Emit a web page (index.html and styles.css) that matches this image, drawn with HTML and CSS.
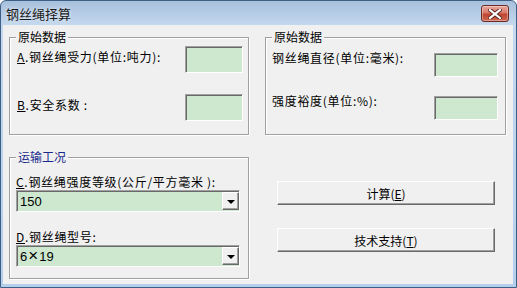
FILE: index.html
```html
<!DOCTYPE html>
<html>
<head>
    <meta charset="utf-8">
    <title>钢丝绳择算</title>
    <link rel="stylesheet" href="styles.css">
</head>
<body>
    <div class="window">
        <div class="titlebar">
            <span class="title">钢丝绳择算</span>
            <button class="close-btn" title="关闭">
                <svg width="14" height="10" viewBox="0 0 14 10">
                    <path d="M2 1 L12 9 M12 1 L2 9" stroke="#5a231d" stroke-width="4" stroke-linecap="square"/>
                    <path d="M2 1 L12 9 M12 1 L2 9" stroke="#ffffff" stroke-width="2.2" stroke-linecap="square"/>
                </svg>
            </button>
        </div>

        <div class="client">
            <!-- 原始数据 (左) -->
            <div class="group group-left">
                <span class="legend">原始数据</span>
                <div class="row row-a">
                    <label><u>A</u>.钢丝绳受力(单位:吨力):</label>
                    <input type="text" class="field field-small">
                </div>
                <div class="row row-b">
                    <label><u>B</u>.安全系数 :</label>
                    <input type="text" class="field field-small">
                </div>
            </div>

            <!-- 原始数据 (右) -->
            <div class="group group-right">
                <span class="legend">原始数据</span>
                <div class="row row-1">
                    <label>钢丝绳直径(单位:毫米):</label>
                    <input type="text" class="field field-wide">
                </div>
                <div class="row row-2">
                    <label>强度裕度(单位:%):</label>
                    <input type="text" class="field field-wide">
                </div>
            </div>

            <!-- 运输工况 -->
            <div class="group group-work">
                <span class="legend legend-blue">运输工况</span>
                <label class="combo-label first"><u>C</u>.钢丝绳强度等级(公斤/平方毫米 ):</label>
                <div class="combo">
                    <span class="combo-value">150</span>
                    <span class="combo-drop"><span class="arrow"></span></span>
                </div>
                <label class="combo-label"><u>D</u>.钢丝绳型号:</label>
                <div class="combo">
                    <span class="combo-value">6<span class="times">×</span>19</span>
                    <span class="combo-drop"><span class="arrow"></span></span>
                </div>
            </div>

            <!-- 按钮 -->
            <div class="actions">
                <button class="btn">计算(<u>E</u>)</button>
                <button class="btn">技术支持(<u>T</u>)</button>
            </div>
        </div>
    </div>
</body>
</html>
```

FILE: styles.css
```css
html, body {
    margin: 0;
    padding: 0;
}
body {
    width: 517px;
    height: 288px;
    overflow: hidden;
    font-family: "Noto Sans CJK SC", "Liberation Sans", sans-serif;
    font-size: 12px;
    color: #000;
    background: #ffffff;
}
.window {
    width: 517px;
    height: 288px;
    box-sizing: border-box;
    border: 1px solid #3d5f86;
    border-radius: 6px 6px 0 0;
    background: linear-gradient(#a7c0dc 0, #c4d8ee 24px, #b4cfec 100%);
    display: flex;
    flex-direction: column;
    padding: 0 3px 3px 2px;
}
.titlebar {
    height: 24px;
    display: flex;
    align-items: flex-start;
    flex: none;
}
.title {
    padding: 5px 0 0 3px;
    line-height: 15px;
    font-size: 13px;
    color: #1b1b1b;
    text-shadow: 0 0 4px rgba(255,255,255,0.8);
}
.close-btn {
    margin: 4px 4px 0 auto;
    width: 28px;
    height: 17px;
    padding: 0;
    border: 1px solid #6b2a22;
    border-radius: 3px;
    background: linear-gradient(#e8aa9d 0, #d8796a 45%, #c0432f 55%, #cf6a52 100%);
    box-shadow: inset 0 0 0 1px rgba(255,255,255,0.35);
    display: flex;
    align-items: center;
    justify-content: center;
}
.client {
    flex: 1;
    background: #f0f0f0;
    display: grid;
    grid-template-columns: 240px 241px;
    grid-template-rows: 98px 122px;
    column-gap: 16px;
    row-gap: 22px;
    padding: 12px 0 0 6px;
}
.group {
    position: relative;
    border: 1px solid #a0a0a0;
    box-shadow: inset 1px 1px 0 #fff, 1px 1px 0 #fff;
    display: flex;
    flex-direction: column;
}
.group label {
    letter-spacing: 0.7px;
    white-space: nowrap;
}
.legend {
    position: absolute;
    top: -8px;
    left: 6px;
    padding: 0 2px;
    line-height: 14px;
    background: #f0f0f0;
}
.legend-blue {
    color: #1a2a8c;
}
.row {
    display: flex;
    justify-content: space-between;
    align-items: flex-start;
}
.group-left {
    padding: 8px 5px 0 7px;
}
.group-left label {
    margin-top: 4px;
    line-height: 14px;
}
.row-b {
    margin-top: 21px;
}
.group-right {
    padding: 13px 7px 0 6px;
}
.group-right label {
    line-height: 14px;
}
.group-right .field {
    margin-top: 2px;
}
.row-2 {
    margin-top: 17px;
}
.field {
    box-sizing: border-box;
    border: 1px solid;
    border-color: #a0a0a0 #fff #fff #a0a0a0;
    box-shadow: inset 1px 1px 0 #696969;
    background: #cde8cf;
    padding: 0;
    margin: 0;
    outline: none;
}
.field-small {
    width: 58px;
    height: 27px;
}
.field-wide {
    width: 64px;
    height: 24px;
}
.group-work {
    padding: 0 6px 0 6px;
}
.combo-label {
    line-height: 14px;
    margin-top: 18px;
    margin-bottom: 1px;
}
.combo-label.first {
    margin-top: 17px;
}
.combo {
    box-sizing: border-box;
    height: 22px;
    width: 224px;
    border: 1px solid;
    border-color: #a0a0a0 #fff #fff #a0a0a0;
    box-shadow: inset 1px 1px 0 #696969;
    background: #cde8cf;
    display: flex;
    align-items: stretch;
    padding: 1px 0 1px 1px;
}
.combo-value {
    flex: 1;
    padding-left: 2px;
    font-family: "Liberation Sans", "Noto Sans CJK SC", sans-serif;
    font-size: 13px;
    line-height: 19px;
}
.times {
    display: inline-block;
    font-size: 17px;
    font-weight: 300;
    padding: 0 1px;
    line-height: 17px;
}
.combo-drop {
    width: 17px;
    box-sizing: border-box;
    background: #f0f0f0;
    border: 1px solid;
    border-color: #fff #696969 #696969 #fff;
    box-shadow: inset -1px -1px 0 #a0a0a0;
    display: flex;
    align-items: center;
    justify-content: center;
}
.arrow {
    width: 0;
    height: 0;
    border-left: 4px solid transparent;
    border-right: 4px solid transparent;
    border-top: 4px solid #000;
    margin-top: 1px;
}
.actions {
    display: flex;
    flex-direction: column;
    padding: 24px 0 0 12px;
    gap: 23px;
}
.btn {
    width: 218px;
    height: 24px;
    box-sizing: border-box;
    background: #f0f0f0;
    border: 1px solid;
    border-color: #fff #696969 #696969 #fff;
    box-shadow: inset -1px -1px 0 #a0a0a0;
    font-family: "Noto Sans CJK SC", "Liberation Sans", sans-serif;
    font-size: 12px;
    color: #000;
    padding: 0;
}
```
